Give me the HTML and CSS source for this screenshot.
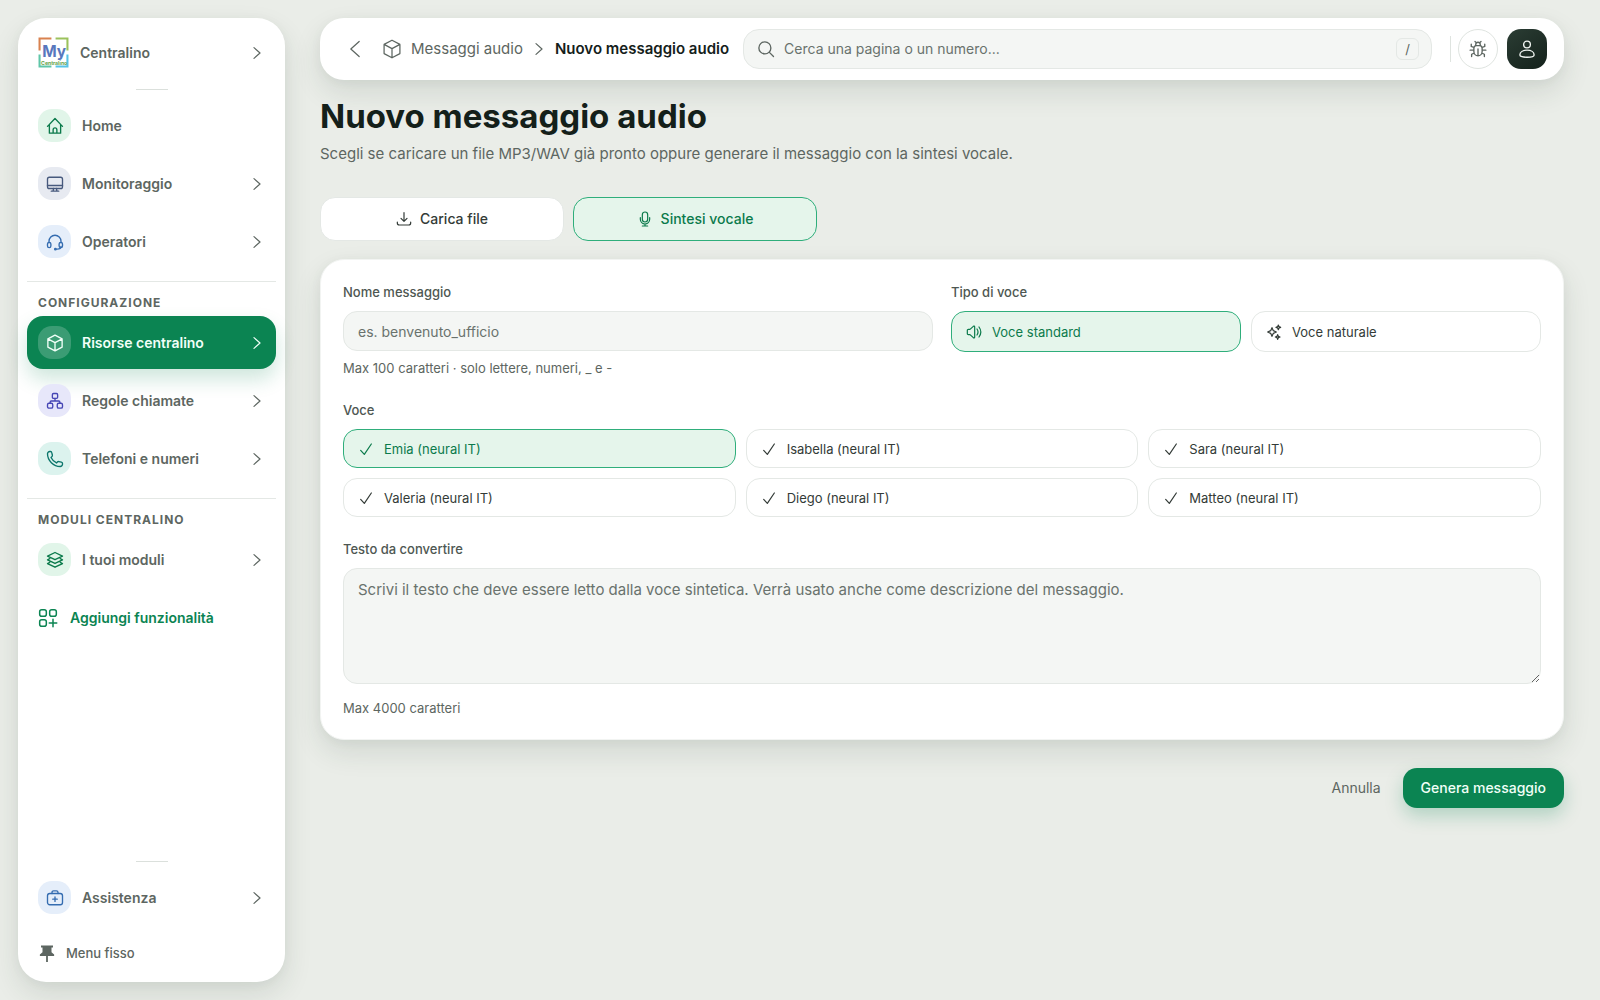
FILE: index.html
```html
<!DOCTYPE html>
<html lang="it">
<head>
<meta charset="utf-8">
<meta name="viewport" content="width=device-width, initial-scale=1">
<title>Nuovo messaggio audio</title>
<link rel="stylesheet" href="styles.css">
</head>
<body>
<svg class="sprite" aria-hidden="true">
  <symbol id="right" viewBox="0 0 24 24"><path d="M7.500 4l9 8-9 8"/></symbol>
  <symbol id="left" viewBox="0 0 24 24"><path d="M17 3L7 12l10 9"/></symbol>
  <symbol id="home" viewBox="0 0 24 24"><path d="M2 12.500L12 2l10 10.500M4.500 10v11.500h15V10M9.500 21.500V17a2.500 2.500 0 0 1 5 0v4.500"/></symbol>
  <symbol id="monitor" viewBox="0 0 24 24"><rect x="2" y="3" width="20" height="15" rx="2.500"/><path d="M2 14h20M10 18l-.5 3.500M14 18l.5 3.500M7 21.500h10"/></symbol>
  <symbol id="headset" viewBox="0 0 24 24"><path d="M4 13v-2a8 8 0 0 1 16 0v2M20 18c0 2.500-2 3.500-5 3.500h-2"/><rect x="2" y="12.500" width="4.500" height="7" rx="2.250"/><rect x="17.500" y="12.500" width="4.500" height="7" rx="2.250"/><circle cx="12.500" cy="21.500" r="1"/></symbol>
  <symbol id="cube" viewBox="0 0 24 24"><path d="M12 1.500l9.500 5v11l-9.500 5-9.500-5v-11zM2.500 6.500l9.500 5 9.500-5M12 11.500v11"/></symbol>
  <symbol id="tree" viewBox="0 0 24 24"><rect x="8.500" y="2" width="7" height="6.500" rx="1.500"/><rect x="2" y="15" width="7" height="6.500" rx="2"/><rect x="15" y="15" width="7" height="6.500" rx="2"/><path d="M12 8.500V12M5.500 15v-1.500A1.500 1.500 0 0 1 7 12h10a1.500 1.500 0 0 1 1.500 1.500V15"/></symbol>
  <symbol id="phone" viewBox="0 0 24 24"><path d="M2 5a3 3 0 0 1 3-3h1c1 0 1.500.5 1.700 1.500l.8 3.500c.2 1-.2 1.500-.8 2l-1 1c1.700 3.500 4 5.700 7.300 7.300l1.200-1.300c.5-.6 1.100-.8 2-.6l3.300.8c1 .3 1.500.8 1.500 1.800v1a3 3 0 0 1-3 3C10 22 2 14 2 5z"/></symbol>
  <symbol id="layers" viewBox="0 0 24 24"><path d="M12 2l10 4.800-10 4.800L2 6.800zM5 10.200l-3 1.500 10 4.900 10-4.900-3-1.500M5 15.200l-3 1.500L12 21.600l10-4.900-3-1.500"/></symbol>
  <symbol id="add" viewBox="0 0 24 24"><rect x="2" y="2" width="8" height="8" rx="2.500"/><rect x="14" y="2" width="8" height="8" rx="2.500"/><rect x="2" y="14" width="8" height="8" rx="2.500"/><path d="M18 13.500v9M13.500 18h9"/></symbol>
  <symbol id="kit" viewBox="0 0 24 24"><rect x="2" y="6" width="20" height="15" rx="3"/><path d="M8 6V4.500A2 2 0 0 1 10 2.500h4a2 2 0 0 1 2 2V6M12 10.500v6M9 13.500h6"/></symbol>
  <symbol id="pin" viewBox="0 0 24 24"><path d="M4 2h16v2.500h-2V11l3.500 3v2h-8.300v8h-2.400v-8H2.500v-2L6 11V4.500H4z" fill="currentColor" stroke="none"/></symbol>
  <symbol id="search" viewBox="0 0 24 24"><circle cx="10.500" cy="10.500" r="8"/><path d="M16.500 16.500L22 22"/></symbol>
  <symbol id="bug" viewBox="0 0 24 24"><path d="M6.500 11a3.500 3.500 0 0 1 3.500-3.500h4a3.500 3.500 0 0 1 3.500 3.500v4.500a5.500 5.500 0 0 1-11 0zM12 12v9M9 7.500V6a3 3 0 0 1 6 0v1.500M9.500 3.500L8 2M14.500 3.500L16 2M6.500 10L3 8.500V5.500M17.500 10L21 8.500V5.500M6.500 13.500H1.500M17.500 13.500h5M7 17.500L3.500 19v3M17 17.500l3.500 1.500v3"/></symbol>
  <symbol id="user" viewBox="0 0 24 24"><circle cx="12" cy="6" r="4.500"/><path d="M2.500 20c0-4 4-6.500 9.500-6.500s9.500 2.500 9.500 6.500c0 2-4 3-9.500 3s-9.500-1-9.500-3z"/></symbol>
  <symbol id="download" viewBox="0 0 24 24"><path d="M12 2.500v13M7.500 11l4.500 4.500 4.500-4.500M2 16.500V18a3 3 0 0 0 3 3h14a3 3 0 0 0 3-3v-1.500"/></symbol>
  <symbol id="mic" viewBox="0 0 24 24"><rect x="8" y="1.500" width="8" height="15" rx="4"/><path d="M5 10v2.500a7 7 0 0 0 14 0V10M12 19.500v3M8 22.500h8"/></symbol>
  <symbol id="speaker" viewBox="0 0 24 24"><path d="M2 9.500a1.500 1.500 0 0 1 1.500-1.500H6l5-4.500c1-.8 2-.4 2 1v15c0 1.400-1 1.800-2 1L6 16H3.500A1.500 1.500 0 0 1 2 14.500zM16.500 7.500c1.700 2.500 1.700 6.500 0 9M19.500 4.500c3.300 4.500 3.300 10.500 0 15"/></symbol>
  <symbol id="sparkles" viewBox="0 0 24 24"><path d="M9 5.500l2 4.500 4.500 2-4.500 2-2 4.500L7 14l-4.500-2L7 10zM18.500 1.500l1 2.500 2.500 1-2.500 1-1 2.500-1-2.500-2.500-1 2.500-1zM17.500 16l1 2.500 2.500 1-2.500 1-1 2.500-1-2.500-2.500-1 2.500-1z"/></symbol>
  <symbol id="check" viewBox="0 0 24 24"><path d="M4 14l5.500 6L20 4.500"/></symbol>
</svg>

<div class="app">
  <aside class="sidebar">
    <a class="brand" href="#">
      <svg class="logo" viewBox="0 0 30 30" aria-hidden="true">
        <path d="M13 1.500H1.500V13" stroke="#d9824f"/>
        <path d="M17 1.500h11.500V13" stroke="#9bc25c"/>
        <path d="M1.500 17v11.500H13" stroke="#5fc6a8"/>
        <path d="M28.500 17v11.500H17" stroke="#58c4e6"/>
        <text x="4" y="19" class="logo-main">My</text>
        <text x="3" y="27" class="logo-sub">Centralino</text>
      </svg>
      <span>Centralino</span>
      <svg class="icon caret"><use href="#right"/></svg>
    </a>
    <hr class="short">
    <nav class="nav" aria-label="Principale">
      <a class="item" href="#"><span class="chip mint"><svg class="icon"><use href="#home"/></svg></span><span>Home</span></a>
      <a class="item" href="#"><span class="chip slate"><svg class="icon"><use href="#monitor"/></svg></span><span>Monitoraggio</span><svg class="icon caret"><use href="#right"/></svg></a>
      <a class="item" href="#"><span class="chip blue"><svg class="icon"><use href="#headset"/></svg></span><span>Operatori</span><svg class="icon caret"><use href="#right"/></svg></a>
    </nav>
    <section class="group">
      <h2>CONFIGURAZIONE</h2>
      <nav class="nav" aria-label="Configurazione">
        <a class="item active" href="#" aria-current="page"><span class="chip"><svg class="icon"><use href="#cube"/></svg></span><span>Risorse centralino</span><svg class="icon caret"><use href="#right"/></svg></a>
        <a class="item" href="#"><span class="chip violet"><svg class="icon"><use href="#tree"/></svg></span><span>Regole chiamate</span><svg class="icon caret"><use href="#right"/></svg></a>
        <a class="item" href="#"><span class="chip teal"><svg class="icon"><use href="#phone"/></svg></span><span>Telefoni e numeri</span><svg class="icon caret"><use href="#right"/></svg></a>
      </nav>
    </section>
    <section class="group">
      <h2>MODULI CENTRALINO</h2>
      <nav class="nav" aria-label="Moduli centralino">
        <a class="item" href="#"><span class="chip mint"><svg class="icon"><use href="#layers"/></svg></span><span>I tuoi moduli</span><svg class="icon caret"><use href="#right"/></svg></a>
        <a class="item add" href="#"><svg class="icon"><use href="#add"/></svg><span>Aggiungi funzionalità</span></a>
      </nav>
    </section>
    <div class="side-foot">
      <hr class="short">
      <a class="item" href="#"><span class="chip blue"><svg class="icon"><use href="#kit"/></svg></span><span>Assistenza</span><svg class="icon caret"><use href="#right"/></svg></a>
      <button class="pin" type="button"><svg class="icon"><use href="#pin"/></svg><span>Menu fisso</span></button>
    </div>
  </aside>

  <div class="content">
    <header class="topbar">
      <button class="back" type="button" aria-label="Indietro"><svg class="icon"><use href="#left"/></svg></button>
      <nav class="crumbs" aria-label="Percorso">
        <a href="#"><svg class="icon"><use href="#cube"/></svg><span>Messaggi audio</span></a>
        <svg class="icon sep"><use href="#right"/></svg>
        <strong>Nuovo messaggio audio</strong>
      </nav>
      <label class="search">
        <svg class="icon"><use href="#search"/></svg>
        <input type="search" placeholder="Cerca una pagina o un numero..." aria-label="Cerca una pagina o un numero">
        <kbd>/</kbd>
      </label>
      <div class="tools">
        <button class="bug" type="button" aria-label="Segnala un problema"><svg class="icon"><use href="#bug"/></svg></button>
        <button class="avatar" type="button" aria-label="Profilo"><svg class="icon"><use href="#user"/></svg></button>
      </div>
    </header>

    <main>
      <h1>Nuovo messaggio audio</h1>
      <p class="lead">Scegli se caricare un file MP3/WAV già pronto oppure generare il messaggio con la sintesi vocale.</p>
      <div class="tabs">
        <button class="option" type="button"><svg class="icon"><use href="#download"/></svg>Carica file</button>
        <button class="option selected" type="button" aria-pressed="true"><svg class="icon"><use href="#mic"/></svg>Sintesi vocale</button>
      </div>
      <form>
        <div class="card">
          <div class="row">
            <div class="field">
              <label for="name">Nome messaggio</label>
              <input id="name" type="text" placeholder="es. benvenuto_ufficio">
              <small>Max 100 caratteri · solo lettere, numeri, _ e -</small>
            </div>
            <div class="field" role="group" aria-labelledby="kind">
              <span class="label" id="kind">Tipo di voce</span>
              <div class="kinds">
                <button class="option selected" type="button" aria-pressed="true"><svg class="icon"><use href="#speaker"/></svg>Voce standard</button>
                <button class="option" type="button"><svg class="icon"><use href="#sparkles"/></svg>Voce naturale</button>
              </div>
            </div>
          </div>
          <div class="field" role="group" aria-labelledby="voice">
            <span class="label" id="voice">Voce</span>
            <div class="voices">
              <button class="option selected" type="button" aria-pressed="true"><svg class="icon"><use href="#check"/></svg>Emia (neural IT)</button>
              <button class="option" type="button"><svg class="icon"><use href="#check"/></svg>Isabella (neural IT)</button>
              <button class="option" type="button"><svg class="icon"><use href="#check"/></svg>Sara (neural IT)</button>
              <button class="option" type="button"><svg class="icon"><use href="#check"/></svg>Valeria (neural IT)</button>
              <button class="option" type="button"><svg class="icon"><use href="#check"/></svg>Diego (neural IT)</button>
              <button class="option" type="button"><svg class="icon"><use href="#check"/></svg>Matteo (neural IT)</button>
            </div>
          </div>
          <div class="field">
            <label for="text">Testo da convertire</label>
            <textarea id="text" placeholder="Scrivi il testo che deve essere letto dalla voce sintetica. Verrà usato anche come descrizione del messaggio."></textarea>
            <small>Max 4000 caratteri</small>
          </div>
        </div>
        <div class="actions">
          <button class="cancel" type="button">Annulla</button>
          <button class="submit" type="submit">Genera messaggio</button>
        </div>
      </form>
    </main>
  </div>
</div>
</body>
</html>
```
FILE: styles.css
```css
:root {
  --ink: #14201a;
  --text: #333b37;
  --muted: #5d6661;
  --line: #e4e8e5;
  --green: #0b8452;
  --soft: #e5f5eb;
  --shadow: 0 12px 28px rgba(30, 60, 45, .12), 0 2px 12px rgba(30, 60, 45, .04);
}

* { box-sizing: border-box; }

body {
  margin: 0;
  background: #eaede8;
  color: var(--text);
  font: 400 14px/20px Inter, "Noto Sans", sans-serif;
}

button, input, textarea, kbd { font: inherit; color: inherit; }
button { border: 0; background: none; padding: 0; cursor: pointer; }
a { color: inherit; text-decoration: none; }
h1, h2, p { margin: 0; }

.sprite { display: none; }
.icon {
  width: 18px;
  height: 18px;
  flex: none;
  fill: none;
  stroke: currentColor;
  stroke-width: 1.8;
  stroke-linecap: round;
  stroke-linejoin: round;
}

.app {
  display: grid;
  grid-template-columns: 267px minmax(0, 1fr);
  gap: 35px;
  min-height: 100vh;
  padding: 18px 36px 18px 18px;
}

/* Sidebar */
.sidebar {
  display: flex;
  flex-direction: column;
  padding: 8px 9px 9px;
  border-radius: 28px;
  background: #fff;
  box-shadow: var(--shadow);
  color: var(--muted);
}
.brand, .item {
  display: flex;
  align-items: center;
  gap: 11px;
  height: 53px;
  padding: 0 11px;
  border-radius: 16px;
  font-size: 14px;
  font-weight: 600;
}
.caret { width: 16px; height: 16px; margin-left: auto; }
.logo { width: 31px; height: 31px; fill: none; stroke-width: 2; }
.logo-main { font: 700 15px Inter, sans-serif; fill: #5877bd; }
.logo-sub { font: 700 5px Inter, sans-serif; fill: #5fa34a; }
.short {
  width: 32px;
  margin: 10px auto 9px;
  border: 0;
  border-top: 1px solid #dbe0dc;
}
.nav { display: flex; flex-direction: column; gap: 5px; }
.chip {
  display: grid;
  place-items: center;
  width: 33px;
  height: 33px;
  border-radius: 14px;
}
.mint { background: #e1f5e9; color: #0b7a4b; }
.slate { background: #e7eaf1; color: #47597d; }
.blue { background: #e5eefa; color: #346cb0; }
.violet { background: #e7e7fa; color: #4747b5; }
.teal { background: #dcf3ee; color: #0c766c; }
.active {
  background: var(--green);
  color: #f1fff8;
  box-shadow: 0 10px 20px rgba(11, 132, 82, .2);
}
.active .chip { background: rgba(255, 255, 255, .2); }
.group {
  margin-top: 13px;
  padding-top: 11px;
  border-top: 1px solid var(--line);
}
.group h2 {
  padding: 0 11px;
  margin-bottom: 3px;
  font-size: 12px;
  line-height: 20px;
  font-weight: 700;
  letter-spacing: 1px;
}
.add { color: var(--green); gap: 12px; }
.add .icon { width: 20px; height: 20px; }
.side-foot { margin-top: auto; }
.pin {
  display: flex;
  align-items: center;
  gap: 10px;
  height: 40px;
  margin-top: 9px;
  padding: 0 11px;
  font-size: 13px;
  font-weight: 500;
}

/* Top bar */
.content { min-width: 0; }
.topbar {
  display: flex;
  align-items: center;
  height: 62px;
  padding: 0 17px 0 25px;
  border-radius: 24px;
  background: #fff;
  box-shadow: var(--shadow);
  color: var(--muted);
}
.back { display: flex; margin-right: 17px; }
.back .icon, .crumbs a .icon { width: 20px; height: 20px; stroke-width: 1.5; }
.crumbs { display: flex; align-items: center; gap: 8px; font-size: 15px; }
.crumbs a { display: flex; align-items: center; gap: 9px; }
.crumbs strong { font-weight: 600; color: var(--ink); }
.crumbs .sep { width: 16px; height: 16px; }
.search {
  display: flex;
  flex: 1;
  align-items: center;
  gap: 9px;
  height: 40px;
  margin-left: 14px;
  padding: 0 12px 0 13px;
  border: 1px solid var(--line);
  border-radius: 16px;
  background: #f4f6f4;
}
.search input {
  flex: 1;
  min-width: 0;
  padding: 0;
  border: 0;
  outline: 0;
  background: none;
}
::placeholder { color: #69726d; opacity: 1; }
kbd {
  width: 23px;
  height: 22px;
  border: 1px solid var(--line);
  border-radius: 6px;
  text-align: center;
  font-size: 13px;
}
.tools {
  display: flex;
  align-items: center;
  gap: 9px;
  margin-left: 18px;
}
.tools::before {
  content: "";
  width: 1px;
  height: 26px;
  margin-right: -2px;
  background: #dfe4e0;
}
.bug, .avatar {
  display: grid;
  place-items: center;
  width: 40px;
  height: 40px;
}
.bug { border: 1px solid #dfe4e0; border-radius: 50%; }
.avatar {
  border-radius: 14px;
  background: linear-gradient(145deg, #2b3d34, #14211b);
  color: #f2f6f3;
}

/* Page */
main { padding-top: 14px; }
h1 {
  color: var(--ink);
  font-size: 33px;
  line-height: 44px;
  font-weight: 700;
}
.lead {
  color: var(--muted);
  font-size: 15px;
  line-height: 24px;
  margin-top: 4px;
}
.tabs {
  display: grid;
  grid-template-columns: 244px 244px;
  gap: 9px;
  margin: 31px 0 18px;
}
.option {
  display: flex;
  align-items: center;
  gap: 10px;
  height: 39px;
  padding: 0 14px;
  border: 1px solid var(--line);
  border-radius: 14px;
  background: #fff;
  font-size: 13px;
  text-align: left;
}
.option .icon { width: 16px; height: 16px; }
.tabs .option {
  justify-content: center;
  gap: 8px;
  height: 44px;
  border-radius: 15px;
  font-size: 14px;
  font-weight: 500;
}
.option.selected {
  border-color: #2fae7b;
  background: var(--soft);
  color: #0b7a4b;
}
.card {
  display: flex;
  flex-direction: column;
  gap: 22px;
  padding: 22px 22px 21px;
  border: 1px solid #f2f4f2;
  border-radius: 24px;
  background: #fff;
  box-shadow: var(--shadow);
}
.row { display: grid; grid-template-columns: 1fr 1fr; gap: 18px; }
.field { display: flex; flex-direction: column; }
.field > label, .label {
  margin-bottom: 9px;
  color: #4e5752;
  font-size: 13px;
  font-weight: 500;
}
.field small {
  margin-top: 7px;
  color: var(--muted);
  font-size: 13px;
}
.field > input, textarea {
  width: 100%;
  height: 40px;
  padding: 0 14px;
  border: 1px solid var(--line);
  border-radius: 14px;
  background: #f4f6f4;
}
textarea {
  display: block;
  height: 116px;
  padding: 11px 14px;
  font-size: 15px;
  resize: vertical;
}
.field textarea + small { margin-top: 14px; }
.kinds { display: grid; grid-template-columns: 1fr 1fr; gap: 10px; }
.kinds .option { height: 41px; }
.voices { display: grid; grid-template-columns: repeat(3, 1fr); gap: 10px; }
.actions {
  display: flex;
  justify-content: flex-end;
  align-items: center;
  gap: 22px;
  margin-top: 28px;
}
.cancel { color: var(--muted); }
.submit {
  height: 40px;
  padding: 0 18px;
  border-radius: 14px;
  background: var(--green);
  color: #f1fff8;
  font-weight: 500;
  box-shadow: 0 8px 18px rgba(11, 132, 82, .25);
}
```
